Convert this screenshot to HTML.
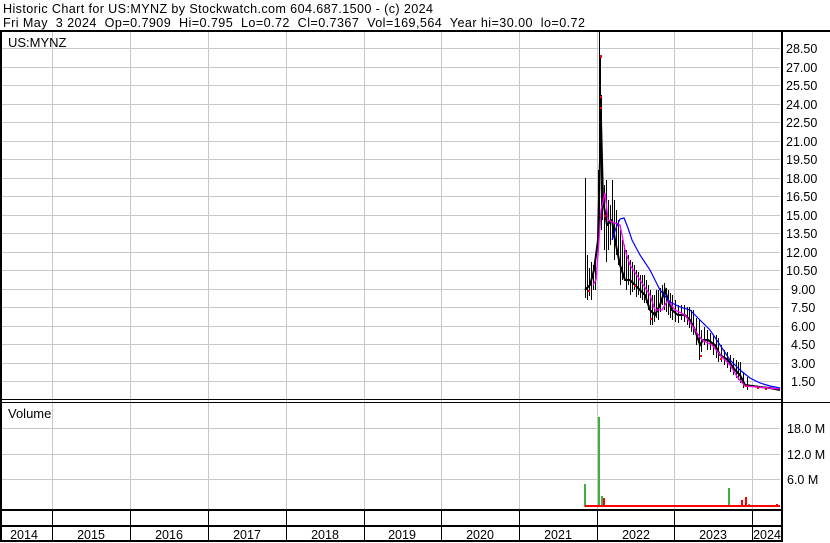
<!DOCTYPE html>
<html><head><meta charset="utf-8"><style>
html,body{margin:0;padding:0;background:#fff;width:830px;height:543px;overflow:hidden}
svg{display:block}
text{font-family:"Liberation Sans",Arial,sans-serif;fill:#000;white-space:pre}
</style></head><body>
<svg width="830" height="543" viewBox="0 0 830 543" xmlns="http://www.w3.org/2000/svg" xml:space="preserve">
<rect width="830" height="543" fill="#fff"/>
<text x="3" y="13" font-size="12.6" textLength="430" lengthAdjust="spacing">Historic Chart for US:MYNZ by Stockwatch.com 604.687.1500 - (c) 2024</text>
<text x="3" y="27" font-size="12.6" textLength="582" lengthAdjust="spacing">Fri May  3 2024  Op=0.7909  Hi=0.795  Lo=0.72  Cl=0.7367  Vol=169,564  Year hi=30.00  lo=0.72</text>
<g stroke="#c8c8c8" stroke-width="1" shape-rendering="crispEdges">
<line x1="2" x2="780" y1="48.5" y2="48.5"/><line x1="2" x2="780" y1="67.5" y2="67.5"/><line x1="2" x2="780" y1="85.5" y2="85.5"/><line x1="2" x2="780" y1="104.5" y2="104.5"/><line x1="2" x2="780" y1="122.5" y2="122.5"/><line x1="2" x2="780" y1="141.5" y2="141.5"/><line x1="2" x2="780" y1="159.5" y2="159.5"/><line x1="2" x2="780" y1="178.5" y2="178.5"/><line x1="2" x2="780" y1="196.5" y2="196.5"/><line x1="2" x2="780" y1="215.5" y2="215.5"/><line x1="2" x2="780" y1="233.5" y2="233.5"/><line x1="2" x2="780" y1="252.5" y2="252.5"/><line x1="2" x2="780" y1="270.5" y2="270.5"/><line x1="2" x2="780" y1="289.5" y2="289.5"/><line x1="2" x2="780" y1="307.5" y2="307.5"/><line x1="2" x2="780" y1="326.5" y2="326.5"/><line x1="2" x2="780" y1="344.5" y2="344.5"/><line x1="2" x2="780" y1="363.5" y2="363.5"/><line x1="2" x2="780" y1="381.5" y2="381.5"/>
<line x1="2" x2="780" y1="428.5" y2="428.5"/><line x1="2" x2="780" y1="454.5" y2="454.5"/><line x1="2" x2="780" y1="479.5" y2="479.5"/>
<line x1="52.5" x2="52.5" y1="32" y2="509"/><line x1="130.5" x2="130.5" y1="32" y2="509"/><line x1="208.5" x2="208.5" y1="32" y2="509"/><line x1="286.5" x2="286.5" y1="32" y2="509"/><line x1="364.5" x2="364.5" y1="32" y2="509"/><line x1="441.5" x2="441.5" y1="32" y2="509"/><line x1="519.5" x2="519.5" y1="32" y2="509"/><line x1="597.5" x2="597.5" y1="32" y2="509"/><line x1="674.5" x2="674.5" y1="32" y2="509"/><line x1="752.5" x2="752.5" y1="32" y2="509"/>
</g>
<g stroke="#000" stroke-width="1" shape-rendering="crispEdges">
<line x1="52.5" x2="52.5" y1="510" y2="541"/><line x1="130.5" x2="130.5" y1="510" y2="541"/><line x1="208.5" x2="208.5" y1="510" y2="541"/><line x1="286.5" x2="286.5" y1="510" y2="541"/><line x1="364.5" x2="364.5" y1="510" y2="541"/><line x1="441.5" x2="441.5" y1="510" y2="541"/><line x1="519.5" x2="519.5" y1="510" y2="541"/><line x1="597.5" x2="597.5" y1="510" y2="541"/><line x1="674.5" x2="674.5" y1="510" y2="541"/><line x1="752.5" x2="752.5" y1="510" y2="541"/>
</g>
<g stroke="#000" stroke-width="1" shape-rendering="crispEdges">
<line x1="585.5" x2="585.5" y1="178" y2="298"/><line x1="587.5" x2="587.5" y1="255" y2="300"/><line x1="589.5" x2="589.5" y1="268" y2="296"/><line x1="591.5" x2="591.5" y1="262" y2="300"/><line x1="593.5" x2="593.5" y1="265" y2="290"/><line x1="595.5" x2="595.5" y1="255" y2="290"/>
<line x1="598.5" x2="598.5" y1="170" y2="245"/><line x1="599.5" x2="599.5" y1="32" y2="230"/><line x1="600.5" x2="600.5" y1="55" y2="150"/><line x1="601.5" x2="601.5" y1="95" y2="230"/><line x1="602.5" x2="602.5" y1="180" y2="220"/><line x1="604.5" x2="604.5" y1="185" y2="250"/><line x1="606.5" x2="606.5" y1="180" y2="262"/><line x1="608.5" x2="608.5" y1="200" y2="250"/><line x1="610.5" x2="610.5" y1="205" y2="245"/><line x1="612.5" x2="612.5" y1="180" y2="240"/><line x1="614.5" x2="614.5" y1="200" y2="260"/><line x1="616.5" x2="616.5" y1="210" y2="255"/><line x1="618.5" x2="618.5" y1="220" y2="265"/>
<line x1="620.5" x2="620.5" y1="230" y2="285"/><line x1="622.5" x2="622.5" y1="240" y2="280"/><line x1="624.5" x2="624.5" y1="245" y2="280"/><line x1="626.5" x2="626.5" y1="250" y2="290"/><line x1="628.5" x2="628.5" y1="255" y2="285"/><line x1="630.5" x2="630.5" y1="260" y2="295"/><line x1="632.5" x2="632.5" y1="262" y2="292"/><line x1="634.5" x2="634.5" y1="265" y2="290"/><line x1="636.5" x2="636.5" y1="270" y2="297"/><line x1="638.5" x2="638.5" y1="272" y2="295"/><line x1="640.5" x2="640.5" y1="275" y2="298"/><line x1="642.5" x2="642.5" y1="275" y2="300"/><line x1="644.5" x2="644.5" y1="275" y2="303"/><line x1="646.5" x2="646.5" y1="280" y2="303"/><line x1="648.5" x2="648.5" y1="285" y2="310"/><line x1="650.5" x2="650.5" y1="290" y2="325"/><line x1="652.5" x2="652.5" y1="295" y2="325"/><line x1="654.5" x2="654.5" y1="295" y2="322"/><line x1="656.5" x2="656.5" y1="290" y2="318"/><line x1="658.5" x2="658.5" y1="290" y2="320"/><line x1="660.5" x2="660.5" y1="288" y2="312"/><line x1="662.5" x2="662.5" y1="285" y2="305"/><line x1="664.5" x2="664.5" y1="283" y2="310"/><line x1="666.5" x2="666.5" y1="288" y2="312"/><line x1="668.5" x2="668.5" y1="290" y2="315"/><line x1="670.5" x2="670.5" y1="293" y2="318"/><line x1="672.5" x2="672.5" y1="295" y2="320"/><line x1="675.5" x2="675.5" y1="300" y2="322"/><line x1="678.5" x2="678.5" y1="305" y2="323"/><line x1="681.5" x2="681.5" y1="305" y2="320"/><line x1="684.5" x2="684.5" y1="305" y2="322"/><line x1="687.5" x2="687.5" y1="307" y2="325"/><line x1="689.5" x2="689.5" y1="307" y2="328"/><line x1="691.5" x2="691.5" y1="310" y2="332"/><line x1="693.5" x2="693.5" y1="310" y2="335"/><line x1="696.5" x2="696.5" y1="318" y2="345"/><line x1="699.5" x2="699.5" y1="320" y2="360"/><line x1="701.5" x2="701.5" y1="330" y2="352"/><line x1="704.5" x2="704.5" y1="327" y2="345"/><line x1="707.5" x2="707.5" y1="330" y2="350"/><line x1="710.5" x2="710.5" y1="333" y2="350"/><line x1="713.5" x2="713.5" y1="335" y2="355"/><line x1="716.5" x2="716.5" y1="335" y2="358"/><line x1="718.5" x2="718.5" y1="338" y2="362"/><line x1="721.5" x2="721.5" y1="345" y2="362"/><line x1="724.5" x2="724.5" y1="350" y2="365"/><line x1="727.5" x2="727.5" y1="352" y2="368"/><line x1="730.5" x2="730.5" y1="355" y2="372"/><line x1="733.5" x2="733.5" y1="358" y2="375"/><line x1="736.5" x2="736.5" y1="360" y2="378"/><line x1="738.5" x2="738.5" y1="362" y2="380"/><line x1="740.5" x2="740.5" y1="362" y2="383"/><line x1="743.5" x2="743.5" y1="372" y2="388"/><line x1="747.5" x2="747.5" y1="377" y2="390"/>
</g>
<polyline fill="none" stroke="#000" stroke-width="2" points="585,290 590,285 594,270 598,240 601,120 603,200 607,225 612,220 615,240 620,265 625,280 630,280 635,285 640,290 645,295 650,310 655,315 660,305 665,290 668,300 672,310 678,315 685,315 690,320 695,330 700,345 703,340 708,340 715,345 720,355 728,360 735,370 740,375 745,385 760,387 770,388 780,390"/>
<polyline fill="none" stroke="#f0f" stroke-width="1.3" points="593,285 596,280 598,255 601,210 605,193 608,220 612,222 620,225 625,250 630,265 640,280 650,295 655,310 662,310 668,300 675,310 685,315 695,330 702,340 712,345 722,357 730,365 738,378 745,386 780,389"/>
<polyline fill="none" stroke="#00f" stroke-width="1.2" points="612,240 616,228 620,219 624,218 628,228 632,240 640,255 650,270 660,290 670,302 680,307 690,310 700,320 710,330 720,345 730,360 740,370 750,378 760,383 770,386 780,388"/>
<g fill="#f00"><rect x="600" y="55" width="2" height="3"/><rect x="600" y="96" width="2" height="2"/><rect x="600" y="107" width="2" height="2"/><rect x="588" y="290" width="2" height="2"/><rect x="604" y="215" width="2" height="2"/><rect x="634" y="285" width="2" height="2"/><rect x="700" y="355" width="2" height="2"/><rect x="757" y="387" width="2" height="2"/><rect x="650" y="318" width="2" height="2"/><rect x="720" y="358" width="2" height="2"/><rect x="745" y="385" width="2" height="2"/><rect x="765" y="388" width="2" height="2"/></g>
<g fill="#3cb043"><rect x="584" y="484" width="2" height="23"/><rect x="598" y="417" width="2" height="90"/><rect x="601" y="496" width="2" height="11"/><rect x="728" y="488" width="2" height="19"/><rect x="748" y="504" width="2" height="3"/></g>
<g fill="#f00"><rect x="585" y="505" width="195" height="2"/><rect x="603" y="498" width="2" height="9"/><rect x="741" y="500" width="2" height="7"/><rect x="745" y="497" width="2" height="10"/><rect x="776" y="504" width="2" height="3"/></g>
<g stroke="#000" fill="none" shape-rendering="crispEdges">
<line x1="0" x2="830" y1="31" y2="31" stroke-width="2"/>
<line x1="1" x2="1" y1="30" y2="542" stroke-width="2"/>
<line x1="782" x2="782" y1="30" y2="542" stroke-width="2"/>
<line x1="0" x2="782" y1="399.5" y2="399.5" stroke-width="1"/>
<line x1="0" x2="830" y1="402.5" y2="402.5" stroke-width="1"/>
<line x1="0" x2="782" y1="510" y2="510" stroke-width="2"/>
<line x1="0" x2="782" y1="526" y2="526" stroke-width="2"/>
<line x1="0" x2="782" y1="541" y2="541" stroke-width="2"/>
</g>
<text x="8" y="47" font-size="13">US:MYNZ</text>
<text x="8" y="418" font-size="13">Volume</text>
<g font-size="12.5">
<text x="786" y="53">28.50</text><text x="786" y="72">27.00</text><text x="786" y="90">25.50</text><text x="786" y="109">24.00</text><text x="786" y="127">22.50</text><text x="786" y="146">21.00</text><text x="786" y="164">19.50</text><text x="786" y="183">18.00</text><text x="786" y="201">16.50</text><text x="786" y="220">15.00</text><text x="786" y="238">13.50</text><text x="786" y="257">12.00</text><text x="786" y="275">10.50</text><text x="791" y="294">9.00</text><text x="791" y="312">7.50</text><text x="791" y="331">6.00</text><text x="791" y="349">4.50</text><text x="791" y="368">3.00</text><text x="791" y="386">1.50</text>
<text x="787" y="433">18.0 M</text><text x="787" y="459">12.0 M</text><text x="787" y="484">6.0 M</text>
</g>
<g font-size="12.5" text-anchor="middle">
<text x="24" y="539">2014</text><text x="91" y="539">2015</text><text x="169" y="539">2016</text><text x="247" y="539">2017</text><text x="325" y="539">2018</text><text x="402" y="539">2019</text><text x="480" y="539">2020</text><text x="558" y="539">2021</text><text x="636" y="539">2022</text><text x="713" y="539">2023</text><text x="767" y="539">2024</text>
</g>
</svg>
</body></html>
